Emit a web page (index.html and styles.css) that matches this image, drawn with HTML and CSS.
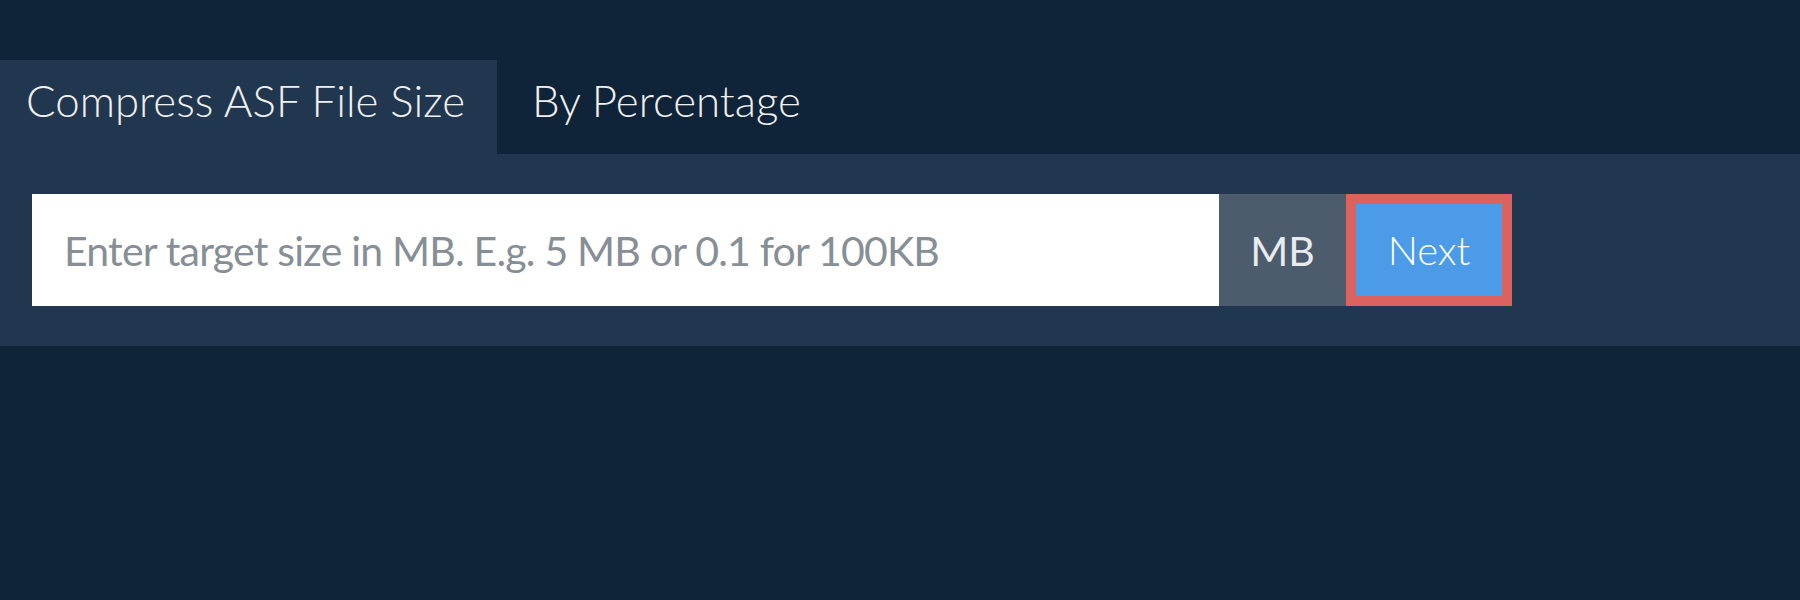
FILE: index.html
```html
<!DOCTYPE html>
<html lang="en">
<head>
<meta charset="utf-8">
<title>Compress ASF File Size</title>
<link rel="stylesheet" href="styles.css">
</head>
<body>
<div class="page">
  <div class="tabs">
    <div class="tab tab-active">Compress ASF File Size</div>
    <div class="tab">By Percentage</div>
  </div>
  <div class="panel">
    <form class="size-form" onsubmit="return false">
      <input class="size-input" type="text" placeholder="Enter target size in MB. E.g. 5 MB or 0.1 for 100KB">
      <span class="unit">MB</span>
      <button class="next-btn" type="submit">Next</button>
    </form>
  </div>
</div>
</body>
</html>
```
FILE: styles.css
```css
html, body {
  margin: 0;
  padding: 0;
}
body {
  background: #0f2339;
  font-family: Lato, "Noto Sans", sans-serif;
  height: 600px;
  overflow: hidden;
}
.page {
  padding-top: 60px;
}
.tabs {
  display: flex;
}
.tab {
  height: 94px;
  box-sizing: border-box;
  padding: 14px 32px 0 26px;
  font-size: 43.8px;
  font-weight: 300;
  line-height: 1.2;
  color: #f0f0f0;
  white-space: nowrap;
}
.tab + .tab {
  padding-left: 35px;
}
.tab-active {
  background: #21364f;
}
.panel {
  background: #21364f;
  padding: 40px 32px;
}
.size-form {
  display: flex;
  height: 112px;
  margin: 0;
}
.size-input {
  flex: 0 0 1187px;
  box-sizing: border-box;
  height: 112px;
  border: none;
  outline: none;
  margin: 0;
  padding: 0 0 0 32px;
  background: #ffffff;
  font-family: Lato, "Noto Sans", sans-serif;
  font-size: 41px;
  letter-spacing: -0.8px;
  color: #333;
}
.size-input::placeholder {
  color: #868e96;
  opacity: 1;
}
.unit {
  flex: 0 0 127px;
  display: flex;
  align-items: center;
  justify-content: center;
  background: #4c5c6c;
  color: #e9ecef;
  font-size: 41px;
}
.next-btn {
  flex: 0 0 166px;
  box-sizing: border-box;
  height: 112px;
  margin: 0;
  padding: 0;
  border: 10px solid #dc625f;
  background: #4c9be8;
  color: #ffffff;
  font-family: Lato, "Noto Sans", sans-serif;
  font-size: 40px;
  font-weight: 300;
  cursor: pointer;
}
```
